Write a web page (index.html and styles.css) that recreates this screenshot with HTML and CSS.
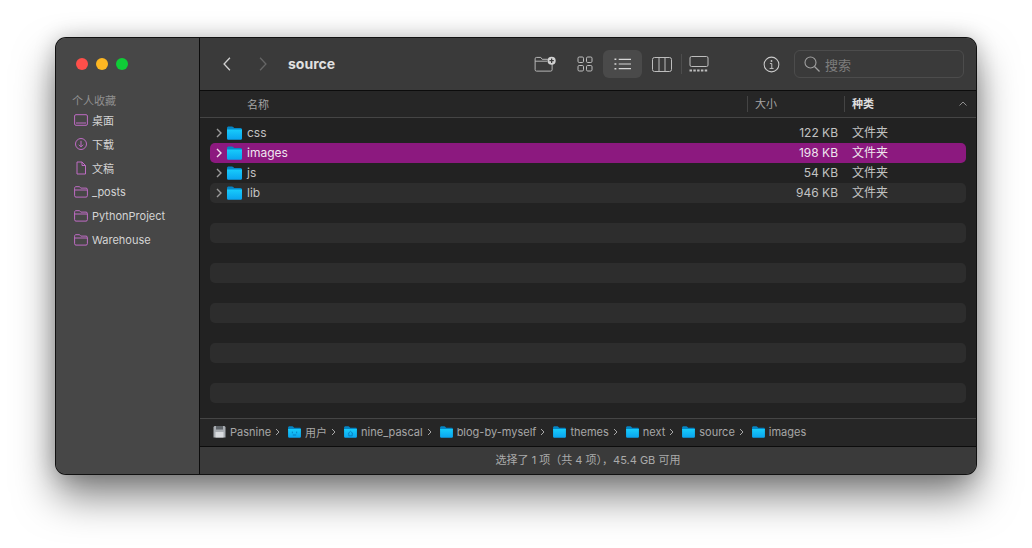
FILE: index.html
```html
<!DOCTYPE html>
<html lang="zh-CN">
<head>
    <meta charset="UTF-8" />
    <title>source</title>
    <link rel="stylesheet" href="styles.css">
</head>
<body>

    <svg class="defs" width="0" height="0">
        <defs>
            <linearGradient id="folderFront" x1="0" y1="0" x2="0" y2="1">
                <stop offset="0" stop-color="#17cbfb" />
                <stop offset="1" stop-color="#0aa3ee" />
            </linearGradient>
            <symbol id="folder" viewBox="0 0 15 14">
                <path d="M0 2.2C0 1 .7.4 1.7.4h3.2c.7 0 1 .2 1.4.7l.8.9h6.2c1 0 1.7.6 1.7 1.6v1H0z" fill="#0585c4" />
                <path d="M0 3.6h15v8.6c0 1-.7 1.6-1.7 1.6H1.7C.7 13.8 0 13.2 0 12.2z" fill="url(#folderFront)" />
            </symbol>
            <symbol id="side-folder" viewBox="0 0 14 12">
                <path d="M.6 2.2C.6 1.2 1.1.7 2 .7h3c.6 0 .9.2 1.2.6l.6.8H12c.9 0 1.4.5 1.4 1.4v6.2c0 .9-.5 1.400-1.4 1.400H2c-.9 0-1.4-.5-1.4-1.400zM.6 4h12.8" fill="none" stroke="#bf6cc4" stroke-width="1" />
            </symbol>
            <symbol id="chev" viewBox="0 0 8 10">
                <path d="M2 1l4 4-4 4" fill="none" stroke="currentColor" stroke-width="1.4" />
            </symbol>
            <symbol id="crumb" viewBox="0 0 5 8">
                <path d="M1 1l3 3-3 3" fill="none" stroke="currentColor" stroke-width="1" />
            </symbol>
        </defs>
    </svg>

    <div class="window">
        <aside class="sidebar">
            <div class="traffic">
                <span class="dot red"></span>
                <span class="dot yellow"></span>
                <span class="dot green"></span>
            </div>
            <div class="side-title">个人收藏</div>
            <ul class="side-list">
                <li>
                    <svg class="side-icon" viewBox="0 0 14 14"><path d="M.6 3c0-.8.5-1.300 1.300-1.300h10.200c.8 0 1.300.5 1.300 1.300v8c0 .8-.5 1.300-1.300 1.300H1.900C1.100 12.300.6 11.800.6 11zM2 10h10" fill="none" stroke="#bf6cc4" /></svg>
                    桌面
                </li>
                <li>
                    <svg class="side-icon" viewBox="0 0 14 14"><circle cx="7" cy="7" r="5.500" fill="none" stroke="#bf6cc4" /><path d="M7 3.800v6M4.800 7.700L7 9.900l2.200-2.200" fill="none" stroke="#bf6cc4" /></svg>
                    下载
                </li>
                <li>
                    <svg class="side-icon" viewBox="0 0 14 14"><path d="M3 1h5l3.500 3.500V13H3zM8 1v3.500h3.500" fill="none" stroke="#bf6cc4" /></svg>
                    文稿
                </li>
                <li><svg class="side-icon"><use href="#side-folder" /></svg>_posts</li>
                <li><svg class="side-icon"><use href="#side-folder" /></svg>PythonProject</li>
                <li><svg class="side-icon"><use href="#side-folder" /></svg>Warehouse</li>
            </ul>
        </aside>

        <section class="content">
            <header class="toolbar">
                <svg class="nav-btn" viewBox="0 0 12 18"><path d="M9.500 1.500L2.500 9l7 7.500" fill="none" stroke="#cfcfcf" stroke-width="1.600" /></svg>
                <svg class="nav-btn next" viewBox="0 0 12 18"><path d="M2.500 1.500L9.500 9l-7 7.500" fill="none" stroke="#656565" stroke-width="1.600" /></svg>
                <div class="path-title">source</div>

                <svg class="tool new-folder" viewBox="0 0 24 18">
                    <path d="M1 3c0-1 .5-1.500 1.500-1.500h4.500l1.500 2h6M1 5.500h13M1 3v11.500c0 1 .5 1.500 1.500 1.500h15c1 0 1.500-.5 1.500-1.500V8" fill="none" stroke="#bdbdbd" />
                    <circle cx="18.500" cy="5" r="4.300" fill="#d2d2d2" />
                    <path d="M18.500 2.700v4.600M16.200 5h4.600" stroke="#3a3a3a" stroke-width="1.300" />
                </svg>
                <svg class="tool grid-view" viewBox="0 0 16 16">
                    <g fill="none" stroke="#bdbdbd"><rect x="1" y="1" width="5.500" height="5.500" rx="1.200" /><rect x="9.500" y="1" width="5.500" height="5.500" rx="1.200" /><rect x="1" y="9.500" width="5.500" height="5.500" rx="1.200" /><rect x="9.500" y="9.500" width="5.500" height="5.500" rx="1.200" /></g>
                </svg>
                <div class="list-btn">
                    <svg class="tool-list" viewBox="0 0 18 14">
                        <path d="M5 2h13M5 7h13M5 12h13" stroke="#d6d6d6" stroke-width="1.300" />
                        <path d="M.5 2h2M.5 7h2M.5 12h2" stroke="#d6d6d6" stroke-width="1.500" />
                    </svg>
                </div>
                <svg class="tool columns" viewBox="0 0 20 15"><rect x=".5" y=".5" width="19" height="14" rx="2" fill="none" stroke="#bdbdbd" /><path d="M7 .5v14M13 .5v14" stroke="#bdbdbd" /></svg>
                <span class="tool-sep"></span>
                <svg class="tool gallery" viewBox="0 0 20 16"><rect x="1" y=".5" width="18" height="10" rx="1.500" fill="none" stroke="#bdbdbd" /><path d="M.5 14.500h19" stroke="#bdbdbd" stroke-width="2" stroke-dasharray="2.500 1.300" /></svg>
                <svg class="tool info" viewBox="0 0 18 18"><circle cx="9" cy="9" r="7.800" fill="none" stroke="#c8c8c8" stroke-width="1.100" /><circle cx="9" cy="5.300" r="1" fill="#c8c8c8" /><path d="M7.300 8h2v5M7 13.200h4.200" fill="none" stroke="#c8c8c8" /></svg>
                <div class="search">
                    <svg class="search-icon" viewBox="0 0 16 16"><circle cx="6.500" cy="6.500" r="5.500" fill="none" stroke="#a0a0a0" stroke-width="1.100" /><path d="M10.500 10.500l5 5" stroke="#a0a0a0" stroke-width="1.200" /></svg>
                    <span>搜索</span>
                </div>
            </header>

            <div class="columns-head">
                <div class="col-name">名称</div>
                <div class="col-size">大小</div>
                <div class="col-kind">种类</div>
                <svg class="sort-arrow" viewBox="0 0 8 5"><path d="M.5 4.500L4 1l3.500 3.500" fill="none" stroke="#8f8f8f" /></svg>
            </div>

            <div class="rows">
                <div class="row">
                    <svg class="row-chev"><use href="#chev" /></svg>
                    <svg class="row-folder"><use href="#folder" /></svg>
                    <span class="row-name">css</span>
                    <span class="row-size">122 KB</span>
                    <span class="row-kind">文件夹</span>
                </div>
                <div class="row selected">
                    <svg class="row-chev"><use href="#chev" /></svg>
                    <svg class="row-folder"><use href="#folder" /></svg>
                    <span class="row-name">images</span>
                    <span class="row-size">198 KB</span>
                    <span class="row-kind">文件夹</span>
                </div>
                <div class="row">
                    <svg class="row-chev"><use href="#chev" /></svg>
                    <svg class="row-folder"><use href="#folder" /></svg>
                    <span class="row-name">js</span>
                    <span class="row-size">54 KB</span>
                    <span class="row-kind">文件夹</span>
                </div>
                <div class="row striped">
                    <svg class="row-chev"><use href="#chev" /></svg>
                    <svg class="row-folder"><use href="#folder" /></svg>
                    <span class="row-name">lib</span>
                    <span class="row-size">946 KB</span>
                    <span class="row-kind">文件夹</span>
                </div>
                <div class="row"></div>
                <div class="row striped"></div>
                <div class="row"></div>
                <div class="row striped"></div>
                <div class="row"></div>
                <div class="row striped"></div>
                <div class="row"></div>
                <div class="row striped"></div>
                <div class="row"></div>
                <div class="row striped"></div>
            </div>

            <div class="pathbar">
                <span class="crumb">
                    <svg class="disk" viewBox="0 0 13 13"><path d="M1.500 1h10l1 1v10.500H.5V2z" fill="#a9adb2" /><path d="M3 1h7v3.500H3z" fill="#5f6469" /><path d="M2.500 7h8v5.500h-8z" fill="#d9dbde" /></svg>
                    Pasnine
                </span>
                <svg class="crumb-sep"><use href="#crumb" /></svg>
                <span class="crumb">
                    <svg class="crumb-folder" viewBox="0 0 15 14"><use href="#folder" width="15" height="14" /><path d="M5 6.500v2M10 6.500v2M5.500 10.500h4" fill="none" stroke="#0679b8" /></svg>
                    用户
                </span>
                <svg class="crumb-sep"><use href="#crumb" /></svg>
                <span class="crumb">
                    <svg class="crumb-folder" viewBox="0 0 15 14"><use href="#folder" width="15" height="14" /><path d="M4.500 9l3-2.800 3 2.800M5.500 8.500v3h4v-3" fill="none" stroke="#0679b8" /></svg>
                    nine_pascal
                </span>
                <svg class="crumb-sep"><use href="#crumb" /></svg>
                <span class="crumb"><svg class="crumb-folder"><use href="#folder" /></svg>blog-by-myself</span>
                <svg class="crumb-sep"><use href="#crumb" /></svg>
                <span class="crumb"><svg class="crumb-folder"><use href="#folder" /></svg>themes</span>
                <svg class="crumb-sep"><use href="#crumb" /></svg>
                <span class="crumb"><svg class="crumb-folder"><use href="#folder" /></svg>next</span>
                <svg class="crumb-sep"><use href="#crumb" /></svg>
                <span class="crumb"><svg class="crumb-folder"><use href="#folder" /></svg>source</span>
                <svg class="crumb-sep"><use href="#crumb" /></svg>
                <span class="crumb"><svg class="crumb-folder"><use href="#folder" /></svg>images</span>
            </div>

            <footer class="statusbar">选择了 1 项（共 4 项），45.4 GB 可用</footer>
        </section>
    </div>

</body>
</html>
```

FILE: styles.css
```css
html,
body {
    height: 100%;
}

body {
    margin: 0;
    padding: 38px 56px 0;
    box-sizing: border-box;
    background-color: #fff;
    font-family: 'Inter', 'Noto Sans CJK SC', sans-serif;
    font-size: 11px;
    color: #b8b8b8;
    overflow: hidden;
}

.defs {
    position: absolute;
}

.window {
    display: flex;
    width: 920px;
    height: 436px;
    box-sizing: border-box;
    border-radius: 10px;
    overflow: hidden;
    background-color: #222;
    box-shadow: 0 0 0 1px #111, inset 0 0 0 1px #6a6a6a, 0 22px 40px rgba(0,0,0,0.5), 0 0 22px rgba(0,0,0,0.22);
}

/* sidebar */
.sidebar {
    width: 144px;
    flex-shrink: 0;
    box-sizing: border-box;
    background-color: #474747;
    border-right: 1px solid #0c0c0c;
}

.traffic {
    display: flex;
    gap: 8px;
    padding: 20px 0 0 20px;
}

.dot {
    width: 12px;
    height: 12px;
    border-radius: 50%;
}

.red { background-color: #fe4f4a; }
.yellow { background-color: #fdb722; }
.green { background-color: #0fcd37; }

.side-title {
    margin: 25px 0 0 16px;
    height: 12px;
    line-height: 12px;
    font-size: 11px;
    color: #909090;
}

.side-list {
    list-style: none;
    margin: 0;
    padding: 0;
}

.side-list li {
    display: flex;
    align-items: center;
    box-sizing: border-box;
    height: 24px;
    padding: 2px 0 0 18px;
    font-size: 11px;
    color: #d4d4d4;
}

.side-icon {
    width: 14px;
    height: 14px;
    margin-right: 4px;
    flex-shrink: 0;
}

/* right pane */
.content {
    flex: 1;
    display: flex;
    flex-direction: column;
    min-width: 0;
}

.toolbar {
    display: flex;
    align-items: center;
    height: 53px;
    flex-shrink: 0;
    box-sizing: border-box;
    background-color: #3a3a3a;
    border-bottom: 1px solid #0c0c0c;
}

.nav-btn {
    width: 10px;
    height: 16px;
    margin-left: 22px;
}

.nav-btn.next {
    margin-left: 26px;
}

.path-title {
    margin-left: 20px;
    margin-bottom: 2px;
    width: 246px;
    font-size: 14px;
    font-weight: 700;
    color: #e0e0e0;
}

.new-folder {
    width: 23px;
    height: 17px;
}

.grid-view {
    width: 16px;
    height: 16px;
    margin-left: 20px;
}

.list-btn {
    display: flex;
    align-items: center;
    justify-content: center;
    width: 39px;
    height: 28px;
    margin-left: 10px;
    border-radius: 6px;
    background-color: #4a4a4a;
}

.tool-list {
    width: 17px;
    height: 14px;
}

.columns {
    width: 20px;
    height: 15px;
    margin-left: 10px;
}

.tool-sep {
    width: 1px;
    height: 20px;
    margin-left: 9px;
    background-color: #4d4d4d;
}

.gallery {
    width: 20px;
    height: 16px;
    margin-left: 7px;
}

.info {
    width: 17px;
    height: 17px;
    margin-left: 54px;
}

.search {
    display: flex;
    align-items: center;
    box-sizing: border-box;
    width: 170px;
    height: 28px;
    margin-left: 14px;
    padding-left: 9px;
    border: 1px solid #4c4c4c;
    border-radius: 6px;
    font-size: 13px;
    color: #7d7d7d;
}

.search-icon {
    width: 16px;
    height: 16px;
    margin-right: 5px;
}

/* column headers */
.columns-head {
    position: relative;
    display: flex;
    align-items: center;
    height: 27px;
    flex-shrink: 0;
    box-sizing: border-box;
    padding-bottom: 1px;
    background-color: #262626;
    border-bottom: 1px solid #454545;
    font-size: 11px;
    color: #a4a4a4;
}

.col-name {
    width: 500px;
    padding-left: 47px;
    box-sizing: border-box;
}

.col-size,
.col-kind {
    height: 16px;
    line-height: 16px;
    padding-left: 7px;
    box-sizing: border-box;
    border-left: 1px solid #444;
}

.col-size {
    width: 97px;
    margin-left: 47px;
}

.col-kind {
    font-weight: 700;
    color: #dedede;
}

.sort-arrow {
    position: absolute;
    right: 9px;
    top: 10px;
    width: 8px;
    height: 5px;
}

/* file rows */
.rows {
    flex: 1;
    padding: 5px 10px 0;
    background-color: #222;
    overflow: hidden;
}

.row {
    display: flex;
    align-items: center;
    height: 20px;
    border-radius: 5px;
    font-size: 12px;
    color: #c2c2c2;
}

.striped {
    background-color: #2d2d2d;
}

.selected {
    background-color: #8c197f;
    color: #f0e6ef;
}

.row-chev {
    width: 8px;
    height: 10px;
    margin-left: 5px;
    color: #9a9a9a;
    flex-shrink: 0;
}

.selected .row-chev {
    color: #f0e0ee;
}

.row-folder {
    width: 15px;
    height: 14px;
    margin-left: 4px;
    flex-shrink: 0;
}

.row-name {
    width: 70px;
    margin-left: 5px;
    margin-bottom: 2px;
}

.row-size {
    width: 521px;
    margin-bottom: 2px;
    text-align: right;
    font-size: 12px;
}

.row-kind {
    margin-left: 14px;
    margin-bottom: 4px;
    font-size: 12px;
}

/* path bar */
.pathbar {
    display: flex;
    align-items: center;
    height: 29px;
    flex-shrink: 0;
    box-sizing: border-box;
    padding: 0 0 2px 13px;
    background-color: #262626;
    border-top: 1px solid #454545;
    border-bottom: 1px solid #0c0c0c;
    font-size: 11px;
    color: #a6a6a6;
}

.crumb {
    display: flex;
    align-items: center;
}

.disk {
    width: 13px;
    height: 13px;
    margin-right: 4px;
}

.crumb-folder {
    width: 13px;
    height: 12px;
    margin-right: 4px;
    flex-shrink: 0;
}

.crumb-sep {
    width: 5px;
    height: 8px;
    margin: 0 8px 0 4px;
    color: #a6a6a6;
}

/* status bar */
.statusbar {
    height: 27px;
    line-height: 27px;
    flex-shrink: 0;
    text-align: center;
    background-color: #3a3a3a;
    font-size: 11px;
    color: #aaa;
}
```
